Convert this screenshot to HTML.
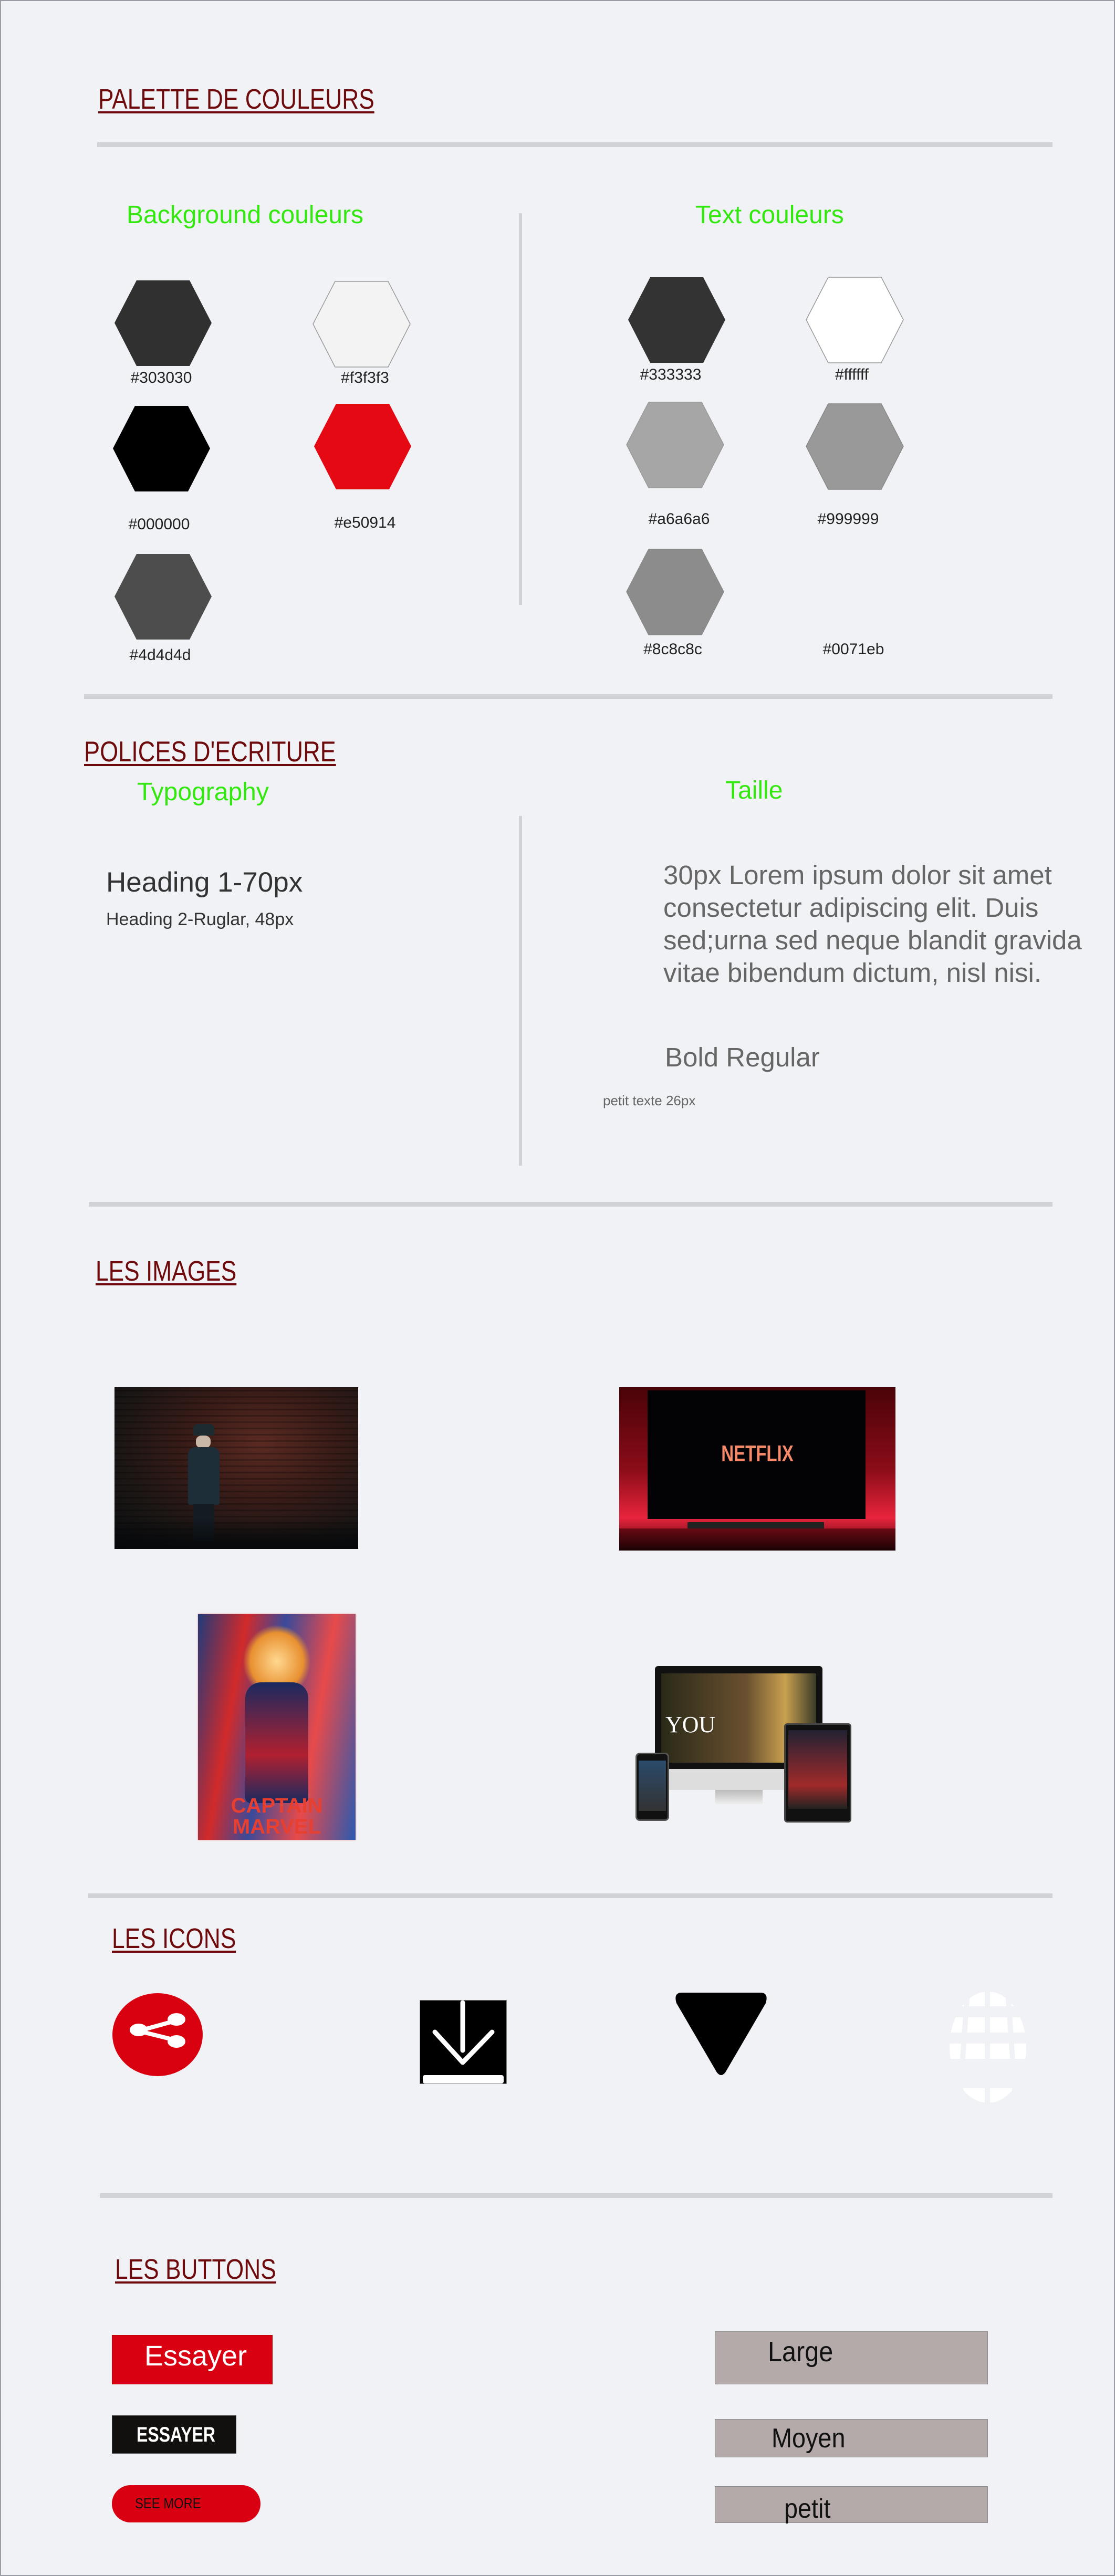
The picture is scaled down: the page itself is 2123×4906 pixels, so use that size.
<!DOCTYPE html>
<html><head><meta charset="utf-8"><style>
*{margin:0;padding:0;box-sizing:border-box}
body{width:2123px;height:4906px;background:#f0f2f5;position:relative;overflow:hidden;font-family:"Liberation Sans",sans-serif}
.frame{position:absolute;left:0;top:0;width:2123px;height:4906px;border:2px solid #9a9ca3}
.a{position:absolute;white-space:nowrap;line-height:1}
.ttl{font-size:54px;color:#6e0a0c;text-decoration:underline;text-decoration-thickness:4px;text-underline-offset:5px;transform:scaleX(.82);transform-origin:left top}
.grn{font-size:48px;color:#33e80f}
.hr{position:absolute;height:9px;background:#d1d2d6}
.vr{position:absolute;width:6px;background:#d1d2d6}
.lbl{position:absolute;width:240px;text-align:center;font-size:30px;line-height:30px;color:#222}
.btn{position:absolute}
</style></head><body>
<div class="frame"></div>

<div class="a ttl" style="left:187px;top:162px">PALETTE DE COULEURS</div>
<div class="hr" style="left:185px;top:271px;width:1819px"></div>
<div class="a grn" style="left:241px;top:386px">Background couleurs</div>
<div class="a grn" style="left:1324px;top:386px">Text couleurs</div>
<div class="vr" style="left:988px;top:406px;height:746px"></div>

<svg class="a" style="left:0;top:0" width="2123" height="1300">
<defs><polygon id="hx" points="42,0 143,0 185,81 143,163 42,163 0,81"/></defs>
<use href="#hx" x="218" y="534" fill="#303030"/>
<use href="#hx" x="596" y="536" fill="#f3f3f3" stroke="#999" stroke-width="1.5"/>
<use href="#hx" x="215" y="773" fill="#000"/>
<use href="#hx" x="598" y="769" fill="#e50914"/>
<use href="#hx" x="218" y="1055" fill="#4d4d4d"/>
<use href="#hx" x="1196" y="528" fill="#333"/>
<use href="#hx" x="1535" y="528" fill="#fff" stroke="#999" stroke-width="1.5"/>
<use href="#hx" x="1193" y="766" fill="#a6a6a6" stroke="#999" stroke-width="1.5"/>
<use href="#hx" x="1535" y="769" fill="#999" stroke="#888" stroke-width="1.5"/>
<use href="#hx" x="1193" y="1046" fill="#8c8c8c" stroke="#888" stroke-width="1.5"/>
</svg>
<div class="lbl" style="left:187px;top:705px">#303030</div>
<div class="lbl" style="left:575px;top:705px">#f3f3f3</div>
<div class="lbl" style="left:183px;top:984px">#000000</div>
<div class="lbl" style="left:575px;top:981px">#e50914</div>
<div class="lbl" style="left:185px;top:1233px">#4d4d4d</div>
<div class="lbl" style="left:1157px;top:699px">#333333</div>
<div class="lbl" style="left:1502px;top:699px">#ffffff</div>
<div class="lbl" style="left:1173px;top:974px">#a6a6a6</div>
<div class="lbl" style="left:1495px;top:974px">#999999</div>
<div class="lbl" style="left:1161px;top:1222px">#8c8c8c</div>
<div class="lbl" style="left:1505px;top:1222px">#0071eb</div>

<div class="hr" style="left:160px;top:1322px;width:1844px"></div>
<div class="a ttl" style="left:160px;top:1404px;font-size:55px">POLICES D'ECRITURE</div>
<div class="a grn" style="left:261px;top:1485px">Typography</div>
<div class="a grn" style="left:1381px;top:1482px">Taille</div>
<div class="vr" style="left:988px;top:1554px;height:666px"></div>
<div class="a" style="left:202px;top:1654px;font-size:53px;color:#333">Heading 1-70px</div>
<div class="a" style="left:202px;top:1734px;font-size:34px;color:#333">Heading 2-Ruglar, 48px</div>
<div class="a" style="left:1263px;top:1636px;font-size:51px;line-height:62px;color:#666">30px Lorem ipsum dolor sit amet<br>consectetur adipiscing elit. Duis<br>sed;urna sed neque blandit gravida<br>vitae bibendum dictum, nisl nisi.</div>
<div class="a" style="left:1266px;top:1988px;font-size:51px;color:#666">Bold Regular</div>
<div class="a" style="left:1148px;top:2083px;font-size:26px;color:#666">petit texte 26px</div>
<div class="hr" style="left:169px;top:2289px;width:1835px"></div>

<div class="a ttl" style="left:182px;top:2394px">LES IMAGES</div>
<div class="a" style="left:218px;top:2642px;width:464px;height:308px;background:radial-gradient(ellipse at 60% 35%,#5a2a22 0%,#3a1c18 35%,#1a1614 70%,#0b0d10 100%)">
 <div style="position:absolute;left:0;top:0;width:100%;height:100%;background:repeating-linear-gradient(0deg,rgba(0,0,0,.25) 0 3px,transparent 3px 12px)"></div>
 <div style="position:absolute;left:150px;top:70px;width:40px;height:22px;background:#1d2a30;border-radius:8px 8px 2px 2px"></div>
 <div style="position:absolute;left:155px;top:92px;width:28px;height:24px;background:#c9b8a8;border-radius:40%"></div>
 <div style="position:absolute;left:140px;top:114px;width:60px;height:110px;background:#1d2e38;border-radius:14px 14px 4px 4px"></div>
 <div style="position:absolute;left:150px;top:222px;width:40px;height:70px;background:#141c22"></div>
 <div style="position:absolute;left:0;bottom:0;width:100%;height:60px;background:linear-gradient(transparent,#06080a)"></div>
</div>
<div class="a" style="left:1179px;top:2642px;width:526px;height:311px;background:linear-gradient(#4a0308,#8a0c18 50%,#e8243c 80%,#3a0208)">
 <div style="position:absolute;left:54px;top:6px;width:415px;height:245px;background:#030204"></div>
 <div style="position:absolute;left:130px;top:257px;width:260px;height:14px;background:#222"></div>
 <div style="position:absolute;left:0;bottom:0;width:100%;height:42px;background:linear-gradient(#6a0a14,#1a0204)"></div>
 <div style="position:absolute;left:0;top:105px;width:526px;text-align:center;font-size:44px;font-weight:bold;color:#f48a6a;transform:scaleX(.75)">NETFLIX</div>
</div>
<div class="a" style="left:377px;top:3074px;width:300px;height:430px;overflow:hidden;background:linear-gradient(100deg,#203a7a 0%,#d22a2a 25%,#3a4a9a 45%,#e84a4a 70%,#2a5ab0 100%);box-shadow:0 0 3px #e88">
 <div style="position:absolute;left:85px;top:20px;width:130px;height:140px;background:radial-gradient(#ffd890,#e89030 55%,transparent 70%)"></div>
 <div style="position:absolute;left:90px;top:130px;width:120px;height:230px;background:linear-gradient(#1a2a60,#b02030 60%,#1a2a60);border-radius:30px 30px 10px 10px"></div>
 <div style="position:absolute;left:0;top:345px;width:300px;text-align:center;font-size:40px;font-weight:bold;color:#e84030;line-height:40px">CAPTAIN<br>MARVEL</div>
</div>
<div class="a" style="left:1247px;top:3173px;width:319px;height:263px">
 <div style="position:absolute;left:0;top:0;width:319px;height:210px;background:#111;border-radius:6px"></div>
 <div style="position:absolute;left:12px;top:14px;width:295px;height:170px;background:linear-gradient(90deg,#2a2a18,#6a5030 55%,#c8a050 80%,#3a3a28)"></div>
 <div style="position:absolute;left:20px;top:90px;font-family:'Liberation Serif',serif;font-size:44px;color:#fff">YOU</div>
 <div style="position:absolute;left:0;top:196px;width:319px;height:40px;background:#ddd"></div>
 <div style="position:absolute;left:115px;top:236px;width:90px;height:27px;background:linear-gradient(#bbb,#eee)"></div>
</div>
<div class="a" style="left:1210px;top:3338px;width:64px;height:130px;background:#111;border-radius:8px;border:3px solid #555">
 <div style="margin:12px 3px;height:96px;background:linear-gradient(#2a4a6a,#333)"></div></div>
<div class="a" style="left:1493px;top:3282px;width:128px;height:189px;background:#111;border-radius:6px;border:3px solid #444">
 <div style="margin:10px 5px;height:150px;background:linear-gradient(#223,#a02a2a 70%,#222)"></div></div>

<div class="hr" style="left:168px;top:3606px;width:1836px"></div>
<div class="a ttl" style="left:213px;top:3665px">LES ICONS</div>
<svg class="a" style="left:214px;top:3796px" width="172" height="158">
 <ellipse cx="86" cy="79" rx="86" ry="79" fill="#d9000f"/>
 <path d="M122,52 L50,72 L122,90" stroke="#fff" stroke-width="8" fill="none"/>
 <ellipse cx="122" cy="50" rx="17" ry="12" fill="#fff"/>
 <ellipse cx="50" cy="70" rx="17" ry="12" fill="#fff"/>
 <ellipse cx="122" cy="92" rx="17" ry="12" fill="#fff"/>
</svg>
<svg class="a" style="left:799px;top:3809px" width="166" height="160">
 <rect x="0.5" y="0.5" width="165" height="159" fill="#000" stroke="#888"/>
 <path d="M82,5 V96" stroke="#fff" stroke-width="9" stroke-linecap="round"/>
 <path d="M29,61 L82,119 L138,61" stroke="#fff" stroke-width="9" fill="none" stroke-linecap="round" stroke-linejoin="round"/>
 <rect x="6" y="143" width="154" height="16" rx="4" fill="#fff"/>
</svg>
<svg class="a" style="left:1286px;top:3795px" width="174" height="160">
 <path d="M12,0 L162,0 Q178,0 172,20 L95,152 Q87,162 79,152 L2,20 Q-4,0 12,0 Z" fill="#000"/>
</svg>
<svg class="a" style="left:1808px;top:3793px" width="146" height="212">
 <defs><clipPath id="gc"><ellipse cx="73" cy="106" rx="73" ry="106"/></clipPath></defs>
 <g clip-path="url(#gc)" fill="#fff">
  <rect x="0" y="1" width="146" height="27"/><rect x="0" y="49" width="146" height="29"/>
  <rect x="0" y="99" width="146" height="29"/><rect x="0" y="184" width="146" height="27"/>
 </g>
 <g fill="#f0f2f5"><rect x="29" y="0" width="10" height="212" transform="skewX(-4)"/><rect x="67" y="0" width="10" height="212"/><rect x="106" y="0" width="10" height="212" transform="skewX(4)"/></g>
</svg>

<div class="hr" style="left:190px;top:4177px;width:1814px"></div>
<div class="a ttl" style="left:219px;top:4295px">LES BUTTONS</div>
<div class="btn" style="left:213px;top:4447px;width:306px;height:94px;background:#d90012;border:1px solid #b00"></div>
<div class="a" style="left:275px;top:4460px;font-size:54px;color:#fff">Essayer</div>
<div class="btn" style="left:213px;top:4600px;width:237px;height:73px;background:#12100e;border:1px solid #444"></div>
<div class="a" style="left:260px;top:4617px;font-size:40px;font-weight:bold;color:#fff;transform:scaleX(.8);transform-origin:left top">ESSAYER</div>
<div class="btn" style="left:213px;top:4733px;width:283px;height:71px;background:#d90012;border-radius:36px"></div>
<div class="a" style="left:257px;top:4754px;font-size:28px;color:#111;transform:scaleX(.85);transform-origin:left top">SEE MORE</div>
<div class="btn" style="left:1361px;top:4440px;width:520px;height:101px;background:#b3aaa9;border:1px solid #8a8a8a"></div>
<div class="a" style="left:1462px;top:4452px;font-size:54px;color:#111;transform:scaleX(.9);transform-origin:left top">Large</div>
<div class="btn" style="left:1361px;top:4607px;width:520px;height:73px;background:#b3aaa9;border:1px solid #8a8a8a"></div>
<div class="a" style="left:1469px;top:4618px;font-size:52px;color:#111;transform:scaleX(.9);transform-origin:left top">Moyen</div>
<div class="btn" style="left:1361px;top:4735px;width:520px;height:70px;background:#b3aaa9;border:1px solid #8a8a8a"></div>
<div class="a" style="left:1493px;top:4752px;font-size:52px;color:#111;transform:scaleX(.9);transform-origin:left top">petit</div>
</body></html>
